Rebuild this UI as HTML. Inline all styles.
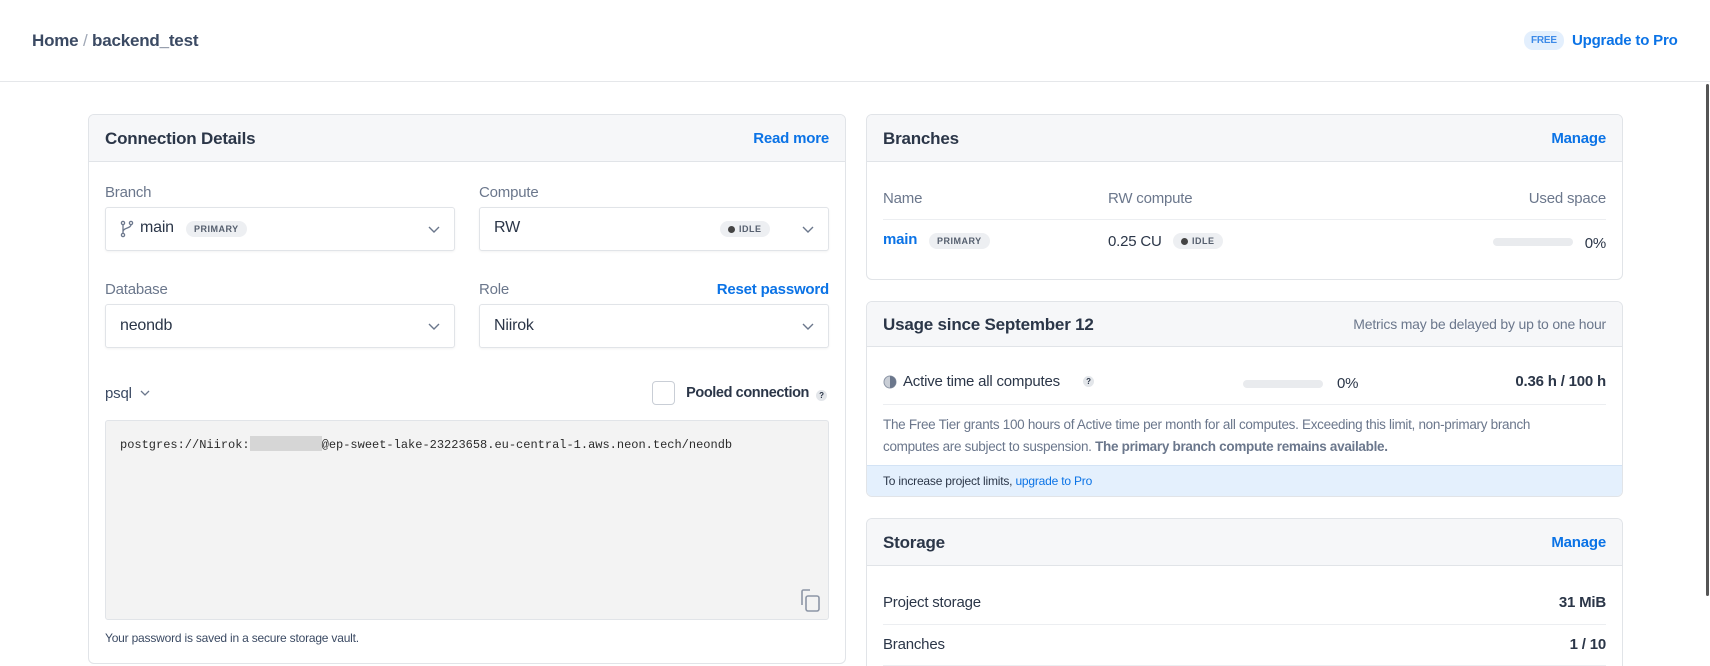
<!DOCTYPE html>
<html style="overflow:hidden;height:666px"><head><meta charset="utf-8"><style>
*{box-sizing:border-box;margin:0;padding:0}
body{width:1710px;height:666px;overflow:hidden;background:#fff;font-family:"Liberation Sans",sans-serif;color:#2b3648;position:relative;letter-spacing:-0.2px}
.a{position:absolute;white-space:nowrap}
.card{position:absolute;border:1px solid #e1e4e8;border-radius:6px;background:#fff;overflow:hidden}
.hd{position:absolute;left:0;right:0;top:0;height:47px;background:#f6f7f9;border-bottom:1px solid #e1e4e8}
.ttl{font-weight:bold;font-size:17px;color:#2b3648}
.lnk{color:#0b73e6;font-weight:bold;font-size:15px}
.lbl{color:#6b778c;font-size:15px}
.sel{position:absolute;border:1px solid #e1e4e8;border-radius:3px;height:44px;background:#fff;box-shadow:0 1px 2px rgba(0,0,0,.05)}
.chev{position:absolute;right:12px;top:13px;width:16px;height:16px}
.pill{display:inline-block;background:#edeff2;border-radius:9px;font-size:9px;font-weight:bold;color:#555f6e;padding:3px 8px;letter-spacing:.5px}
.bar{position:absolute;height:8px;border-radius:4px;background:#e9ebee}
.div{position:absolute;height:1px;background:#eceef1}
</style></head><body>
<div class="a" style="left:32px;top:31px;font-size:17px;font-weight:bold;color:#3b4a63">Home <span style="color:#a0a8b6;font-weight:normal">/</span> backend_test</div>
<div class="a" style="left:1524px;top:31px;background:#e3effd;color:#3d8ae8;font-size:10px;font-weight:bold;padding:4px 7px;border-radius:9px">FREE</div>
<div class="a lnk" style="left:1572px;top:32px">Upgrade to Pro</div>
<div class="a" style="left:0;top:81px;width:1710px;height:1px;background:#e5e7ea"></div>
<div class="a" style="left:1706px;top:84px;width:3px;height:512px;background:#555;border-radius:2px"></div>

<div class="card" style="left:88px;top:114px;width:758px;height:550px">
 <div class="hd"></div>
 <div class="a ttl" style="left:16px;top:14px">Connection Details</div>
 <div class="a lnk" style="right:16px;top:15px">Read more</div>
 <div class="a lbl" style="left:16px;top:69px">Branch</div>
 <div class="a lbl" style="left:390px;top:69px">Compute</div>
 <div class="sel" style="left:16px;top:92px;width:350px">
  <svg class="a" style="left:14px;top:12px" width="14" height="18" viewBox="0 0 14 18" fill="none" stroke="#6b778c" stroke-width="1.3"><circle cx="3" cy="3" r="1.6"/><circle cx="3" cy="15" r="1.6"/><circle cx="11" cy="3" r="1.6"/><path d="M3 4.6v8.8M11 4.6c0 4-8 3-8 7"/></svg>
  <div class="a" style="left:34px;top:11px;font-size:16px;color:#2b3648">main</div>
  <div class="a pill" style="left:80px;top:13px">PRIMARY</div>
  <svg class="chev" viewBox="0 0 16 16" fill="none" stroke="#6b778c" stroke-width="1.4"><path d="M3 6l5 5 5-5"/></svg>
 </div>
 <div class="sel" style="left:390px;top:92px;width:350px">
  <div class="a" style="left:14px;top:11px;font-size:16px">RW</div>
  <div class="a pill" style="left:240px;top:13px;padding:3px 8px"><span style="display:inline-block;width:7px;height:7px;border-radius:50%;background:#444;margin-right:4px;vertical-align:-1px"></span>IDLE</div>
  <svg class="chev" viewBox="0 0 16 16" fill="none" stroke="#6b778c" stroke-width="1.4"><path d="M3 6l5 5 5-5"/></svg>
 </div>
 <div class="a lbl" style="left:16px;top:166px">Database</div>
 <div class="a lbl" style="left:390px;top:166px">Role</div>
 <div class="a lnk" style="right:16px;top:166px">Reset password</div>
 <div class="sel" style="left:16px;top:189px;width:350px">
  <div class="a" style="left:14px;top:12px;font-size:16px">neondb</div>
  <svg class="chev" viewBox="0 0 16 16" fill="none" stroke="#6b778c" stroke-width="1.4"><path d="M3 6l5 5 5-5"/></svg>
 </div>
 <div class="sel" style="left:390px;top:189px;width:350px">
  <div class="a" style="left:14px;top:12px;font-size:16px">Niirok</div>
  <svg class="chev" viewBox="0 0 16 16" fill="none" stroke="#6b778c" stroke-width="1.4"><path d="M3 6l5 5 5-5"/></svg>
 </div>
 <div class="a" style="left:16px;top:270px;font-size:15px;color:#3b4a63">psql</div>
 <svg class="a" style="left:50px;top:272px" width="12" height="12" viewBox="0 0 12 12" fill="none" stroke="#6b778c" stroke-width="1.3"><path d="M2 4l4 4 4-4"/></svg>
 <div class="a" style="left:563px;top:266px;width:23px;height:24px;border:1px solid #c9ced6;border-radius:4px"></div>
 <div class="a" style="right:36px;top:270px;font-size:14.5px;font-weight:bold;color:#2b3648;letter-spacing:-0.4px">Pooled connection</div>
 <div class="a" style="left:727px;top:275px;width:11px;height:11px;border-radius:50%;background:#e3e6ea;font-size:8px;font-weight:bold;text-align:center;line-height:11px">?</div>
 <div class="a" style="left:16px;top:305px;width:724px;height:200px;background:#f3f3f3;border:1px solid #e1e4e8;border-radius:3px">
  <div class="a" style="left:14px;top:15px;font-family:'Liberation Mono',monospace;font-size:12px;color:#2b2b2b;letter-spacing:0">postgres://Niirok:<span style="display:inline-block;width:72px;height:15px;background:#d6d6d6;vertical-align:-3px"></span>@ep-sweet-lake-23223658.eu-central-1.aws.neon.tech/neondb</div>
  <svg class="a" style="left:691px;top:167px" width="26" height="26" viewBox="0 0 26 26" fill="none" stroke="#8d96a6" stroke-width="1.6"><path d="M5 17V3.5a1.5 1.5 0 0 1 1.5-1.5H13"/><rect x="9" y="8" width="13" height="15" rx="2"/></svg>
 </div>
 <div class="a" style="left:16px;top:516px;font-size:12px;color:#3b4a63">Your password is saved in a secure storage vault.</div>
</div>

<div class="card" style="left:866px;top:114px;width:757px;height:166px">
 <div class="hd"></div>
 <div class="a ttl" style="left:16px;top:14px">Branches</div>
 <div class="a lnk" style="right:16px;top:15px">Manage</div>
 <div class="a lbl" style="left:16px;top:75px">Name</div>
 <div class="a lbl" style="left:241px;top:75px">RW compute</div>
 <div class="a lbl" style="right:16px;top:75px">Used space</div>
 <div class="div" style="left:16px;right:16px;top:104px"></div>
 <div class="a lnk" style="left:16px;top:116px;font-size:15px">main</div>
 <div class="a pill" style="left:62px;top:118px">PRIMARY</div>
 <div class="a" style="left:241px;top:118px;font-size:15px">0.25 CU</div>
 <div class="a pill" style="left:306px;top:118px"><span style="display:inline-block;width:7px;height:7px;border-radius:50%;background:#444;margin-right:4px;vertical-align:-1px"></span>IDLE</div>
 <div class="bar" style="left:626px;top:123px;width:80px"></div>
 <div class="a" style="right:16px;top:120px;font-size:15px">0%</div>
</div>

<div class="card" style="left:866px;top:301px;width:757px;height:196px">
 <div class="hd" style="height:45px"></div>
 <div class="a ttl" style="left:16px;top:13px">Usage since September 12</div>
 <div class="a lbl" style="right:16px;top:14px;font-size:14px">Metrics may be delayed by up to one hour</div>
 <svg class="a" style="left:16px;top:73px" width="14" height="14" viewBox="0 0 14 14"><circle cx="7" cy="7" r="6" fill="#c9ced6" stroke="#8d96a6"/><path d="M7 1a6 6 0 0 1 0 12z" fill="#6b778c"/></svg>
 <div class="a" style="left:36px;top:71px;font-size:15px">Active time all computes</div>
 <div class="a" style="left:216px;top:74px;width:11px;height:11px;border-radius:50%;background:#e3e6ea;font-size:8px;font-weight:bold;text-align:center;line-height:11px">?</div>
 <div class="bar" style="left:376px;top:78px;width:80px"></div>
 <div class="a" style="left:470px;top:73px;font-size:15px">0%</div>
 <div class="a" style="right:16px;top:71px;font-size:15px;font-weight:bold">0.36 h / 100 h</div>
 <div class="div" style="left:16px;right:16px;top:102px"></div>
 <div class="a" style="left:16px;top:112px;font-size:13.5px;line-height:22px;color:#6b778c;white-space:normal;width:690px;letter-spacing:-0.3px">The Free Tier grants 100 hours of Active time per month for all computes. Exceeding this limit, non-primary branch computes are subject to suspension. <b>The primary branch compute remains available.</b></div>
 <div class="a" style="left:0;right:0;top:163px;height:33px;background:#e4f0fd;border-top:1px solid #d3e3f5"></div>
 <div class="a" style="left:16px;top:172px;font-size:12px;color:#2b3648">To increase project limits, <span style="color:#0b73e6">upgrade to Pro</span></div>
</div>

<div class="card" style="left:866px;top:518px;width:757px;height:160px;border-bottom:none;border-radius:6px 6px 0 0">
 <div class="hd"></div>
 <div class="a ttl" style="left:16px;top:14px">Storage</div>
 <div class="a lnk" style="right:16px;top:15px">Manage</div>
 <div class="a" style="left:16px;top:75px;font-size:15px">Project storage</div>
 <div class="a" style="right:16px;top:75px;font-size:15px;font-weight:bold">31 MiB</div>
 <div class="div" style="left:16px;right:16px;top:105px"></div>
 <div class="a" style="left:16px;top:117px;font-size:15px">Branches</div>
 <div class="a" style="right:16px;top:117px;font-size:15px;font-weight:bold">1 / 10</div>
 <div class="div" style="left:16px;right:16px;top:146px"></div>
</div>
</body></html>
